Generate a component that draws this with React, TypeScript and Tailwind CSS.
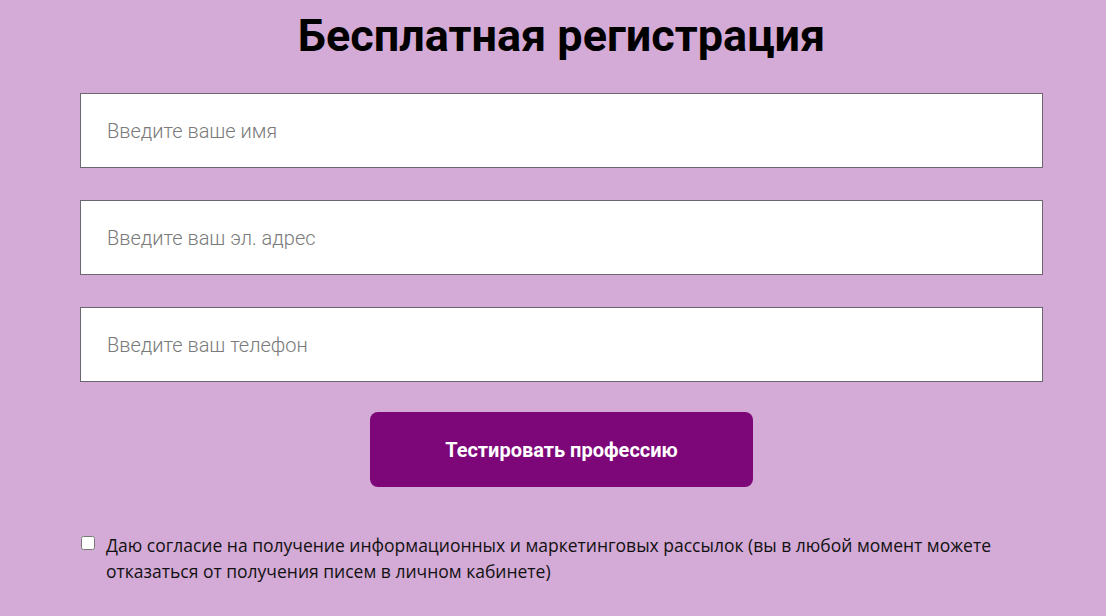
export default function App() {
  return (
    <main className="min-h-screen w-full bg-[#d4aad6] font-['Roboto',sans-serif]">
      <div className="ml-[80px] w-[963px] pt-[6px]">
        <h1 className="text-center text-[45px] font-bold leading-[60px] text-black">
          Бесплатная регистрация
        </h1>

        <form className="mt-[27px] flex flex-col gap-[32px]">
          {["Введите ваше имя", "Введите ваш эл. адрес", "Введите ваш телефон"].map((p) => (
            <input
              key={p}
              type="text"
              placeholder={p}
              className="h-[75px] w-full border border-[#6b6670] bg-white px-[26px] text-[20px] font-light text-[#333] placeholder:text-[#7a7a7a] outline-none"
            />
          ))}
        </form>

        <div className="mt-[30px] flex justify-center">
          <button className="h-[75px] w-[383px] rounded-[8px] bg-[#7d0679] text-[20px] font-bold text-white">
            Тестировать профессию
          </button>
        </div>

        <label className="mt-[45px] flex items-start gap-[11px] font-['Open_Sans',sans-serif] text-[17.5px] leading-[26px] text-[#111]">
          <input type="checkbox" className="mt-[4px] ml-[1px] h-[14px] w-[14px] shrink-0" />
          <span>
            Даю согласие на получение информационных и маркетинговых рассылок (вы в любой момент можете отказаться от
            получения писем в личном кабинете)
          </span>
        </label>
      </div>
    </main>
  );
}
